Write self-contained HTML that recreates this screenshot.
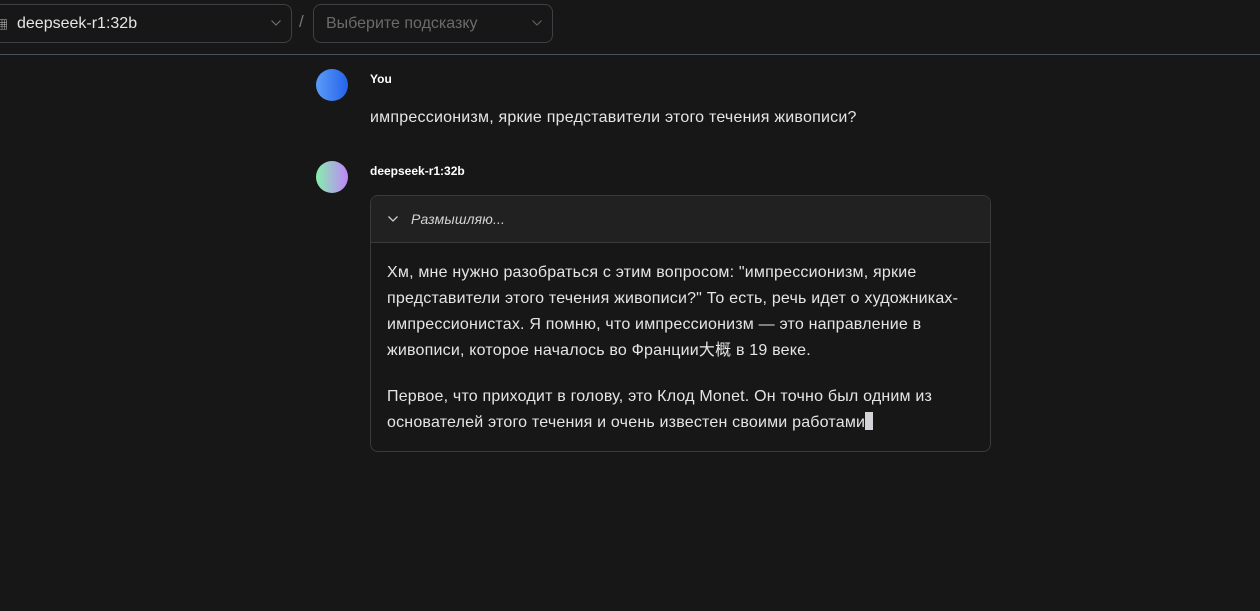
<!DOCTYPE html>
<html><head><meta charset="utf-8"><style>
*{box-sizing:border-box;margin:0;padding:0}
body{width:1260px;height:611px;background:#171717;font-family:"Liberation Sans","Noto Sans CJK SC",sans-serif;color:#e5e5e5;position:relative;overflow:hidden}
.sel{position:absolute;top:4px;height:39px;border:1px solid #3f3f46;border-radius:8px;font-size:16px;line-height:37px}
.chev{position:absolute;right:10px;top:15px}
.line{position:absolute;left:0;right:0;top:54px;height:1px;background:#4b5060}
.av{position:absolute;left:316px;width:32px;height:32px;border-radius:50%}
.name{position:absolute;left:370px;font-size:12px;font-weight:bold;color:#fff}
.box{position:absolute;left:370px;top:195px;width:621px;height:257px;border:1px solid #3a3a3a;border-radius:8px;overflow:hidden;background:#171717}
.hd{height:47px;background:#212121;border-bottom:1px solid #3a3a3a;font-style:italic;font-size:14px;color:#d4d4d4;line-height:46px;padding-left:40px;position:relative;letter-spacing:0.15px}
.bd{padding:17px 16px;font-size:16px;line-height:26px;color:#e5e5e5;letter-spacing:0.2px}
.bd p{margin-bottom:20px}
.cur{display:inline-block;width:8px;height:18px;background:#d4d4d8;vertical-align:-3px}
</style></head><body>
<div style="position:absolute;left:-4px;top:16px;width:6px;height:14px;color:#ccc;font-size:12px">▦</div>
<div class="sel" style="left:-10px;width:302px;padding-left:26px;color:#e5e5e5">deepseek-r1:32b
<svg class="chev" width="10" height="6" viewBox="0 0 10 6"><path d="M0.5 0.5l4.5 4.5 4.5-4.5" fill="none" stroke="#777" stroke-width="1"/></svg></div>
<div style="position:absolute;left:299px;top:12px;font-size:17px;color:#777">/</div>
<div class="sel" style="left:313px;width:240px;padding-left:12px;color:#6b6b6b">Выберите подсказку
<svg class="chev" width="10" height="6" viewBox="0 0 10 6"><path d="M0.5 0.5l4.5 4.5 4.5-4.5" fill="none" stroke="#666" stroke-width="1"/></svg></div>
<div class="line"></div>

<div class="av" style="top:69px;background:linear-gradient(90deg,#5b9cf8,#2563eb)"></div>
<div class="name" style="top:72px">You</div>
<div style="position:absolute;left:370px;top:109px;font-size:16px;color:#e5e5e5;letter-spacing:0.22px">импрессионизм, яркие представители этого течения живописи?</div>

<div class="av" style="top:161px;background:linear-gradient(90deg,#86efac,#c084fc)"></div>
<div class="name" style="top:164px">deepseek-r1:32b</div>
<div class="box">
<div class="hd"><svg style="position:absolute;left:17px;top:20px" width="10" height="6" viewBox="0 0 10 6"><path d="M0.5 0.5l4.5 4.5 4.5-4.5" fill="none" stroke="#ccc" stroke-width="1.3"/></svg>Размышляю...</div>
<div class="bd">
<p>Хм, мне нужно разобраться с этим вопросом: "импрессионизм, яркие представители этого течения живописи?" То есть, речь идет о художниках-импрессионистах. Я помню, что импрессионизм — это направление в живописи, которое началось во Франции大概 в 19 веке.</p>
<p>Первое, что приходит в голову, это Клод Monet. Он точно был одним из основателей этого течения и очень известен своими работами<span class="cur"></span></p>
</div></div>
</body></html>
